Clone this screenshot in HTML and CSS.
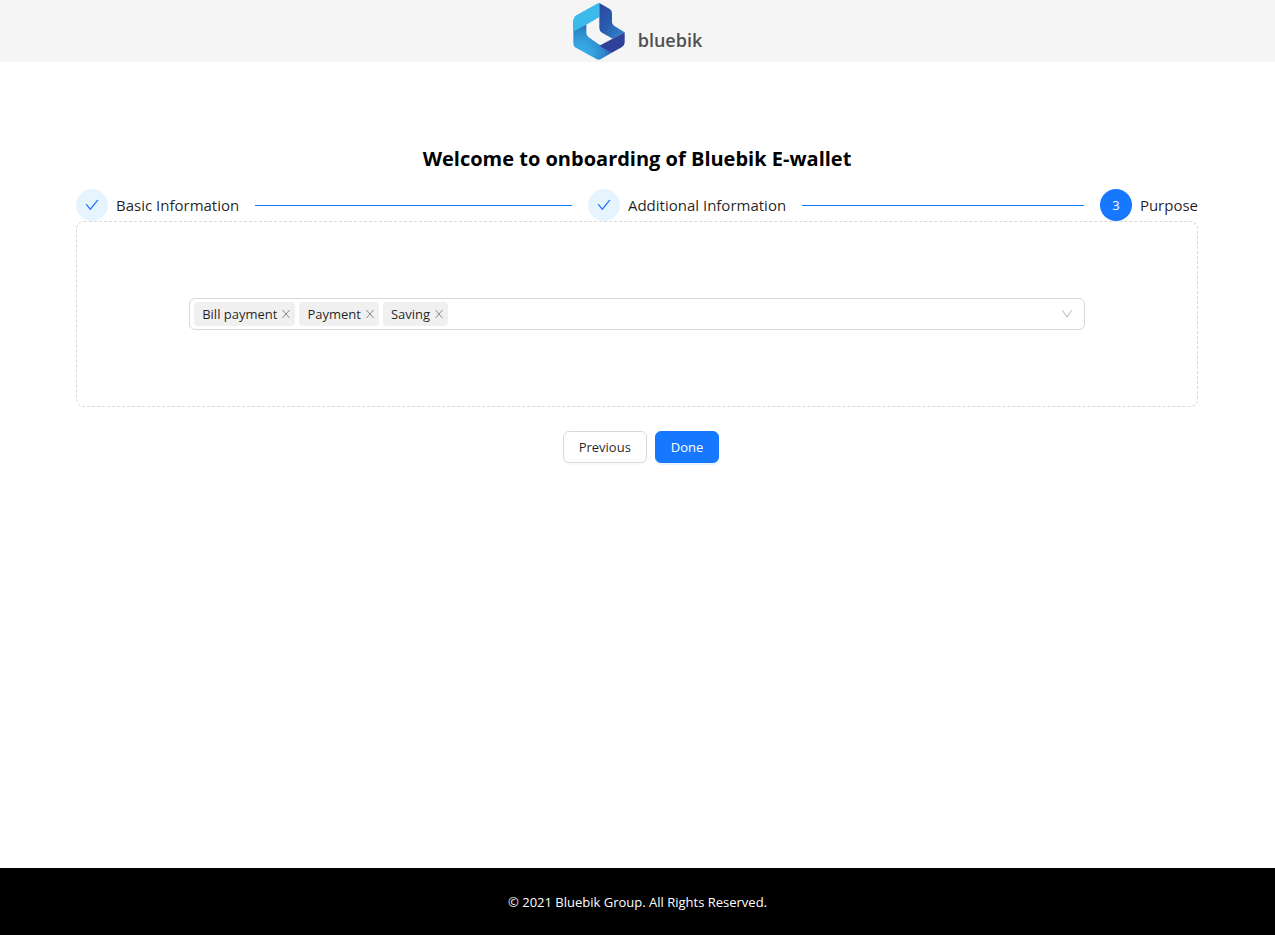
FILE: index.html
```html
<!DOCTYPE html>
<html lang="en">
<head>
<meta charset="utf-8">
<meta name="viewport" content="width=device-width, initial-scale=1">
<title>Bluebik E-wallet</title>
<link rel="stylesheet" href="styles.css">
</head>
<body>
<header class="header">
  <svg class="logo-mark" viewBox="39 9 154 171" aria-hidden="true">
    <defs>
      <radialGradient id="left" gradientUnits="userSpaceOnUse" cx="62" cy="160" r="92"><stop offset="0" stop-color="#38ade5"/><stop offset=".35" stop-color="#35a3de"/><stop offset=".75" stop-color="#2d86ca"/><stop offset="1" stop-color="#2763b0"/></radialGradient>
      <linearGradient id="right" x1="0" y1="0" x2="1" y2="1"><stop offset="0" stop-color="#2c459f"/><stop offset=".45" stop-color="#2a5bae"/><stop offset="1" stop-color="#2f8fd2"/></linearGradient>
    </defs>
    <path fill="url(#left)" d="M39 60L78 74V98Q78 107 85 112L153 159L122 177Q115 181 108 177L48 144Q39 139 39 128Z"/>
    <path fill="#3cbaec" d="M117 9V51L78 74L41 94L39 60Q39 51 48 46L110 11Q113 9 117 9Z"/>
    <path fill="url(#right)" d="M117 9L147 26Q155 30 155 40V66Q155 73 161 77L193 97L157 116L125 98Q117 93 117 84Z"/>
    <path fill="#2f419b" d="M193 97V127Q193 136 185 141L153 159L117 137Z"/>
  </svg>
  <span class="logo-name">bluebik</span>
</header>
<main class="content">
  <h1 class="title">Welcome to onboarding of Bluebik E-wallet</h1>
  <ol class="steps">
    <li class="step step-done">
      <span class="step-icon"><svg class="icon-check" viewBox="64 64 896 896" aria-hidden="true"><path d="M912 190h-69.900c-9.800 0-19.100 4.500-25.100 12.200L404.700 724.500 207 474a32 32 0 0 0-25.100-12.200H112c-6.700 0-10.400 7.700-6.300 12.900l273.900 347c12.800 16.200 37.400 16.200 50.300 0l488.400-618.900c4.100-5.100.4-12.800-6.300-12.800z"/></svg></span>
      <span class="step-title">Basic Information</span>
    </li>
    <li class="step step-done">
      <span class="step-icon"><svg class="icon-check" viewBox="64 64 896 896" aria-hidden="true"><path d="M912 190h-69.900c-9.800 0-19.100 4.500-25.100 12.200L404.700 724.500 207 474a32 32 0 0 0-25.100-12.200H112c-6.700 0-10.400 7.700-6.300 12.900l273.900 347c12.800 16.200 37.400 16.200 50.300 0l488.400-618.900c4.100-5.100.4-12.800-6.300-12.800z"/></svg></span>
      <span class="step-title">Additional Information</span>
    </li>
    <li class="step step-active" aria-current="step">
      <span class="step-icon">3</span>
      <span class="step-title">Purpose</span>
    </li>
  </ol>
  <section class="panel">
    <div class="select">
      <span class="tag">Bill payment<button class="tag-close" type="button" aria-label="Remove Bill payment"><svg viewBox="0 0 10 10" aria-hidden="true"><path d="M1.500 1L8.500 9M8.500 1L1.500 9"/></svg></button></span>
      <span class="tag">Payment<button class="tag-close" type="button" aria-label="Remove Payment"><svg viewBox="0 0 10 10" aria-hidden="true"><path d="M1.500 1L8.500 9M8.500 1L1.500 9"/></svg></button></span>
      <span class="tag">Saving<button class="tag-close" type="button" aria-label="Remove Saving"><svg viewBox="0 0 10 10" aria-hidden="true"><path d="M1.500 1L8.500 9M8.500 1L1.500 9"/></svg></button></span>
      <input class="select-input" type="text" role="combobox" aria-expanded="false" aria-label="Purpose">
      <svg class="select-arrow" viewBox="64 64 896 896" aria-hidden="true"><path d="M884 256h-75c-5.100 0-9.900 2.500-12.900 6.600L512 654.200 227.900 262.600c-3-4.100-7.800-6.600-12.900-6.600h-75c-6.500 0-10.300 7.400-6.500 12.700l352.600 486.100c12.800 17.600 39 17.600 51.700 0l352.600-486.100c3.900-5.300.1-12.700-6.400-12.700z"/></svg>
    </div>
  </section>
  <div class="actions">
    <button class="btn" type="button">Previous</button>
    <button class="btn btn-primary" type="button">Done</button>
  </div>
</main>
<footer class="footer">© 2021 Bluebik Group. All Rights Reserved.</footer>
</body>
</html>
```
FILE: styles.css
```css
* { box-sizing: border-box; }
body {
  margin: 0;
  min-height: 100vh;
  display: flex;
  flex-direction: column;
  background: #fff;
  color: rgba(0, 0, 0, 0.88);
  font-family: "Open Sans", "Noto Sans", sans-serif;
  font-size: 13px;
  line-height: 22px;
}
button, input { font: inherit; color: inherit; }
.header {
  display: flex;
  justify-content: center;
  align-items: flex-start;
  gap: 13px;
  padding: 3px 0 2px;
  background: #f5f5f5;
}
.logo-mark { width: 52px; height: 57px; }
.logo-name {
  padding-top: 26px;
  font-size: 18px;
  font-weight: 600;
  color: #505050;
}
.content { flex: 1; padding: 80px 77px 0 76px; }
.title {
  margin: 0 0 14px;
  font-size: 20px;
  line-height: 33px;
  font-weight: 700;
  text-align: center;
  color: #000;
}
.steps {
  display: flex;
  gap: 16px;
  margin: 0;
  padding: 0;
  list-style: none;
}
.step { display: flex; align-items: center; gap: 8px; }
.step-done { flex: 1; }
.step-done::after {
  content: "";
  flex: 1;
  height: 1px;
  margin-left: 8px;
  background: #1677ff;
}
.step-icon {
  display: flex;
  align-items: center;
  justify-content: center;
  width: 32px;
  height: 32px;
  border-radius: 50%;
  background: #e6f4ff;
  color: #1677ff;
}
.step-active .step-icon { background: #1677ff; color: #fff; }
.icon-check { width: 14px; height: 14px; fill: currentColor; }
.step-title { font-size: 15px; }
.panel {
  padding: 76px 10%;
  border: 1px dashed #d9d9d9;
  border-radius: 8px;
}
.select {
  display: flex;
  align-items: center;
  gap: 4px;
  min-height: 32px;
  padding: 0 11px 0 4px;
  border: 1px solid #d9d9d9;
  border-radius: 6px;
}
.tag {
  display: flex;
  align-items: center;
  gap: 4px;
  height: 24px;
  padding: 0 4px 0 8px;
  border-radius: 4px;
  background: #f0f0f0;
}
.tag-close {
  display: flex;
  padding: 0;
  border: 0;
  background: none;
  color: #8c8c8c;
}
.tag-close svg { width: 10px; height: 10px; fill: none; stroke: currentColor; }
.select-input {
  flex: 1;
  min-width: 4px;
  height: 24px;
  padding: 0;
  border: 0;
  outline: 0;
  background: transparent;
}
.select-arrow { width: 12px; height: 12px; fill: #bfbfbf; }
.actions {
  display: flex;
  justify-content: center;
  gap: 8px;
  padding: 24px 0 24px 8px;
}
.btn {
  height: 32px;
  padding: 0 15px;
  border: 1px solid #d9d9d9;
  border-radius: 6px;
  background: #fff;
  box-shadow: 0 2px 0 rgba(0, 0, 0, 0.02);
}
.btn-primary {
  border-color: #1677ff;
  background: #1677ff;
  color: #fff;
  box-shadow: 0 2px 0 rgba(5, 145, 255, 0.1);
}
.footer {
  padding: 23px 48px 22px;
  background: #000;
  color: #fff;
  text-align: center;
}
```
